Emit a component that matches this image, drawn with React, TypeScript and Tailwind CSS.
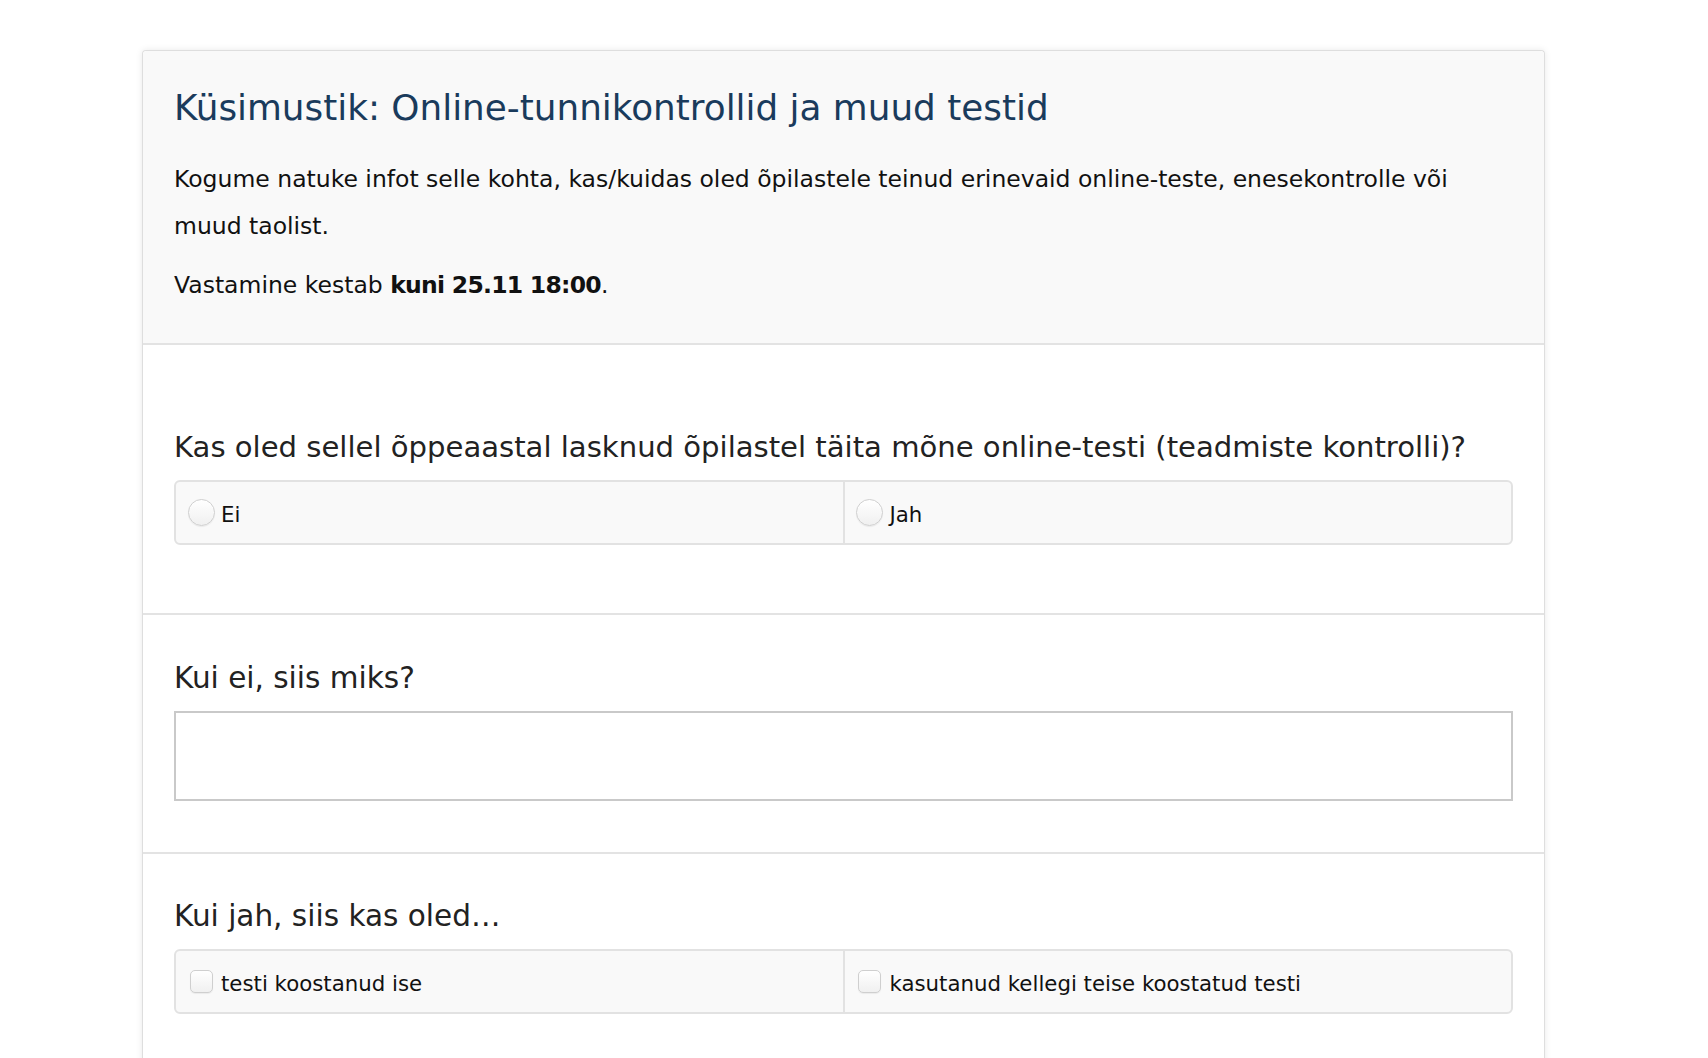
import React from "react";

function Radio() {
  return (
    <span className="flex h-[28px] w-[28px] shrink-0 items-center justify-center">
      <span className="block h-[27px] w-[27px] rounded-full border border-[#cfcfcf] bg-gradient-to-b from-white to-[#f0f0f0] shadow-[inset_0_1px_1px_rgba(255,255,255,0.9),0_1px_1px_rgba(0,0,0,0.06)]" />
    </span>
  );
}

function Check() {
  return (
    <span className="flex h-[28px] w-[28px] shrink-0 items-center justify-center">
      <span className="block h-[23px] w-[23px] rounded-[5px] border border-[#cfcfcf] bg-gradient-to-b from-white to-[#f0f0f0] shadow-[0_1px_1px_rgba(0,0,0,0.06)]" />
    </span>
  );
}

function Option({ kind, label, first }: { kind: "radio" | "check"; label: string; first?: boolean }) {
  return (
    <label
      className={
        "flex h-full flex-1 cursor-pointer items-center gap-[6px] pl-[11px] " +
        (first ? "border-r-2 border-[#e2e2e2]" : "")
      }
    >
      {kind === "radio" ? <Radio /> : <Check />}
      <span className="pt-[5px] text-[21.3px] leading-none text-[#111]">{label}</span>
    </label>
  );
}

function OptionRow({ kind, labels }: { kind: "radio" | "check"; labels: [string, string] }) {
  return (
    <div className="mt-[15px] flex h-[65px] w-full rounded-[6px] border-2 border-[#e2e2e2] bg-[#f9f9f9]">
      <Option kind={kind} label={labels[0]} first />
      <Option kind={kind} label={labels[1]} />
    </div>
  );
}

function Question({ children, long }: { children: React.ReactNode; long?: boolean }) {
  return (
    <h2 className={(long ? "text-[29.1px]" : "text-[29.5px]") + " leading-[36px] font-normal text-[#222]"}>
      {children}
    </h2>
  );
}

export default function App() {
  return (
    <div className="min-h-[1058px] bg-white pt-[50px] font-['DejaVu_Sans',sans-serif]">
      <div className="ml-[142px] w-[1403px] min-h-[1008px] rounded-t-[4px] border border-b-0 border-[#dedede] bg-white shadow-[0_0_7px_rgba(0,0,0,0.09)]">
        <header className="rounded-t-[4px] border-b-2 border-[#e3e3e3] bg-[#f9f9f9] px-[31px] pt-[36px] pb-[34px]">
          <h1 className="text-[35.8px] leading-[42px] font-normal text-[#1a3b5c]">
            Küsimustik: Online-tunnikontrollid ja muud testid
          </h1>
          <p className="mt-[27px] max-w-[1320px] text-[23.5px] leading-[47px] text-[#111]">
            Kogume natuke infot selle kohta, kas/kuidas oled õpilastele teinud erinevaid online-teste, enesekontrolle või muud taolist.
          </p>
          <p className="mt-[12px] text-[23.5px] leading-[47px] text-[#111]">
            Vastamine kestab <strong className="font-bold tracking-[-0.75px]">kuni 25.11 18:00</strong>.
          </p>
        </header>

        <section className="border-b-2 border-[#e3e3e3] px-[31px] pt-[84px] pb-[68px]">
          <Question long>Kas oled sellel õppeaastal lasknud õpilastel täita mõne online-testi (teadmiste kontrolli)?</Question>
          <OptionRow kind="radio" labels={["Ei", "Jah"]} />
        </section>

        <section className="border-b-2 border-[#e3e3e3] px-[31px] pt-[45px] pb-[51px]">
          <Question>Kui ei, siis miks?</Question>
          <textarea className="mt-[15px] block h-[90px] w-full resize-none border-2 border-[#c9c9c9] bg-white outline-none" />
        </section>

        <section className="px-[31px] pt-[44px] pb-[60px]">
          <Question>Kui jah, siis kas oled…</Question>
          <OptionRow kind="check" labels={["testi koostanud ise", "kasutanud kellegi teise koostatud testi"]} />
        </section>
      </div>
    </div>
  );
}
